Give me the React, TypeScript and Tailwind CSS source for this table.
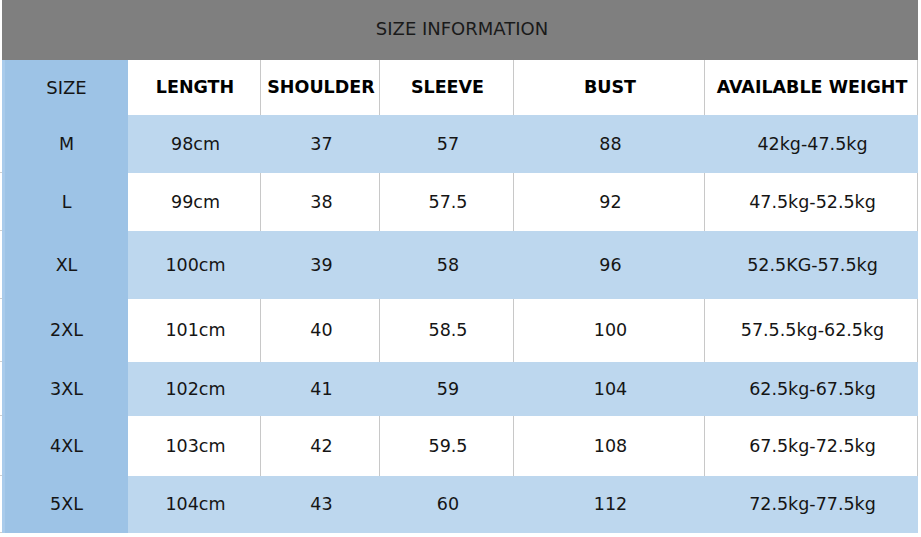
const headers = ["LENGTH", "SHOULDER", "SLEEVE", "BUST", "AVAILABLE WEIGHT"];

const rows = [
  { size: "M", h: "h-[58px]", cells: ["98cm", "37", "57", "88", "42kg-47.5kg"] },
  { size: "L", h: "h-[58px]", cells: ["99cm", "38", "57.5", "92", "47.5kg-52.5kg"] },
  { size: "XL", h: "h-[68px]", cells: ["100cm", "39", "58", "96", "52.5KG-57.5kg"] },
  { size: "2XL", h: "h-[63px]", cells: ["101cm", "40", "58.5", "100", "57.5.5kg-62.5kg"] },
  { size: "3XL", h: "h-[54px]", cells: ["102cm", "41", "59", "104", "62.5kg-67.5kg"] },
  { size: "4XL", h: "h-[60px]", cells: ["103cm", "42", "59.5", "108", "67.5kg-72.5kg"] },
  { size: "5XL", h: "h-[57px]", cells: ["104cm", "43", "60", "112", "72.5kg-77.5kg"] },
];

const widths = ["w-[133px]", "w-[119px]", "w-[134px]", "w-[191px]", "w-[213px]"];

export default function App() {
  return (
    <div className="w-[921px] h-[537px] bg-white overflow-hidden font-['DejaVu_Sans',sans-serif] text-[#151515]">
      {/* Title bar */}
      <div className="ml-[2px] w-[916px] h-[60px] bg-[#7f7f7f] flex items-center justify-center text-[18px] text-[#1a1a1a] pl-[4px] pb-[3px]">
        SIZE INFORMATION
      </div>

      {/* Header row */}
      <div className="flex h-[55px]">
        <div className="w-[2px]" />
        <div className="w-[126px] bg-[#9dc3e6] border-l-[3px] border-[#a9cbeb] flex items-center justify-center text-[18px]">
          SIZE
        </div>
        {headers.map((h, i) => (
          <div
            key={h}
            className={`${widths[i]} bg-white border-r border-[#c8c8c8] flex items-center justify-center text-[17.5px] font-bold text-black pl-[2px]`}
          >
            {h}
          </div>
        ))}
      </div>

      {/* Data rows */}
      {rows.map((r, idx) => {
        const blue = idx % 2 === 0;
        return (
          <div key={r.size} className={`flex ${r.h}`}>
            <div className="w-[2px] flex flex-col justify-end">
              <div className="h-px bg-[#cfcfcf]" />
            </div>
            <div className="w-[126px] bg-[#9dc3e6] border-l-[3px] border-[#a9cbeb] flex items-center justify-center text-[17.5px]">
              {r.size}
            </div>
            {r.cells.map((c, i) => (
              <div
                key={i}
                className={`${widths[i]} flex items-center justify-center text-[17.5px] border-r pl-[3px] ${
                  blue ? "bg-[#bdd7ee] border-[#bdd7ee]" : "bg-white border-[#c8c8c8]"
                } ${blue && i === 4 ? "border-[#aac6df]" : ""}`}
              >
                {c}
              </div>
            ))}
          </div>
        );
      })}
    </div>
  );
}
